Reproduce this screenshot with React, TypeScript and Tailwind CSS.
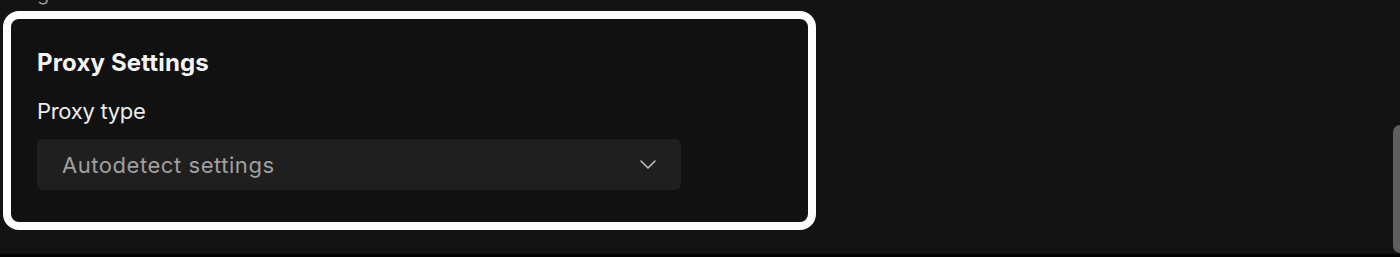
import React from "react";

export default function App() {
  return (
    <div
      className="relative w-[1400px] h-[257px] overflow-hidden bg-[#131313]"
      style={{ fontFamily: "Inter, 'Noto Sans', sans-serif" }}
    >
      <div className="flex flex-col pl-[3px]">
        <div className="h-[11px] overflow-hidden pl-[34px]">
          <div className="-mt-[19px] text-[20px] leading-[24px] text-[#9a9a9a]">
            general
          </div>
        </div>
        <div className="w-[813px] h-[219px] rounded-[16px] border-[8px] border-white bg-[#111111] pl-[26px] pt-[30px]">
          <div className="-mt-[1px] text-[24px] leading-[29px] font-bold text-[#f5f5f5] tracking-[0.15px]">
            Proxy Settings
          </div>
          <div className="mt-[21px] text-[22px] leading-[26px] text-[#ececec] tracking-[-0.3px]">
            Proxy type
          </div>
          <div className="mt-[15px] flex h-[51px] w-[644px] items-center justify-between rounded-[6px] bg-[#1f1f1f] pl-[25px] pr-[25px]">
            <span className="text-[22px] leading-[26px] text-[#a0a0a0] tracking-[0.55px]">
              Autodetect settings
            </span>
            <svg width="16" height="9" viewBox="0 0 16 9" fill="none">
              <path
                d="M1 1L8 8L15 1"
                stroke="#bdbdbd"
                strokeWidth="1.6"
                strokeLinecap="round"
                strokeLinejoin="round"
              />
            </svg>
          </div>
        </div>
      </div>
      <div className="absolute right-0 top-[125px] h-[128px] w-[7px] rounded-l-full rounded-r-[2px] bg-[#5e5e5e]" />
      <div className="absolute bottom-0 left-0 h-[3px] w-full bg-black" />
    </div>
  );
}
